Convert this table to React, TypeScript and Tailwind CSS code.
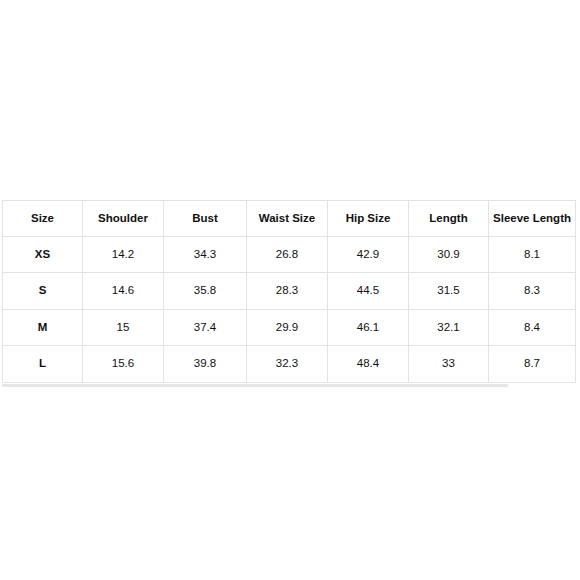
import React from "react"

const headers = ["Size", "Shoulder", "Bust", "Waist Size", "Hip Size", "Length", "Sleeve Length"]

const rows = [
  ["XS", "14.2", "34.3", "26.8", "42.9", "30.9", "8.1"],
  ["S", "14.6", "35.8", "28.3", "44.5", "31.5", "8.3"],
  ["M", "15", "37.4", "29.9", "46.1", "32.1", "8.4"],
  ["L", "15.6", "39.8", "32.3", "48.4", "33", "8.7"],
]

const rowHeights = ["h-[36px]", "h-[36px]", "h-[37px]", "h-[36px]", "h-[37px]"]

function Cell({ children, bold }: { children: React.ReactNode; bold?: boolean }) {
  return (
    <div
      className={
        "flex items-center justify-center border-r border-b border-[#e3e3e3] text-[11.5px] text-[#111] " +
        (bold ? "font-bold" : "")
      }
    >
      {children}
    </div>
  )
}

export default function App() {
  return (
    <div className="w-[580px] h-[580px] bg-white pt-[200px] pl-[2px] font-['Liberation_Sans',Arial,sans-serif]">
      <div className="w-[574px] border-l border-t border-[#e3e3e3]">
        {[headers, ...rows].map((r, i) => (
          <div key={i} className={"grid grid-cols-[80px_81px_83px_81px_81px_80px_87px] " + rowHeights[i]}>
            {r.map((c, j) => (
              <Cell key={j} bold={i === 0 || j === 0}>
                {c}
              </Cell>
            ))}
          </div>
        ))}
      </div>
      <div className="mt-px h-[3px] w-[506px] bg-[#e6e6e6]" />
    </div>
  )
}
